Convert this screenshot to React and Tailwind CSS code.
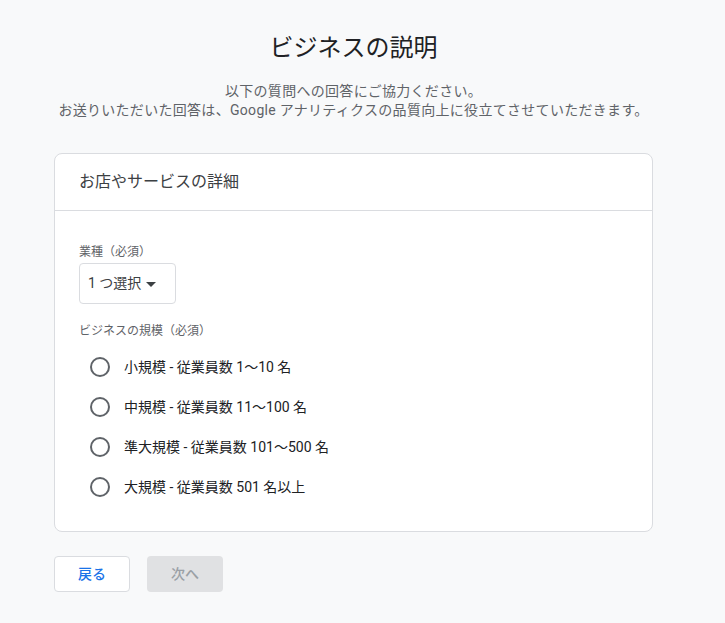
import React, { useState } from 'react';

const sizes = [
  '小規模 - 従業員数 1〜10 名',
  '中規模 - 従業員数 11〜100 名',
  '準大規模 - 従業員数 101〜500 名',
  '大規模 - 従業員数 501 名以上',
];

export default function App() {
  const [size, setSize] = useState(null);

  return (
    <div
      className="min-h-[623px] bg-[#f8f9fa]"
      style={{ fontFamily: "Roboto, 'Noto Sans CJK JP', sans-serif" }}
    >
      <div className="ml-[54px] w-[599px] pt-[30px]">
        {/* Heading */}
        <h1 className="text-center text-[24px] leading-[36px] text-[#202124]">ビジネスの説明</h1>
        <div className="mt-[16px] text-center text-[14px] leading-[19px] tracking-[0.3px] text-[#5f6368]">
          <p>以下の質問への回答にご協力ください。</p>
          <p className="whitespace-nowrap">お送りいただいた回答は、Google アナリティクスの品質向上に役立てさせていただきます。</p>
        </div>

        {/* Card */}
        <div className="mt-[33px] rounded-lg border border-[#dadce0] bg-white">
          <div className="h-[57px] border-b border-[#dadce0] px-6 flex items-center">
            <h2 className="text-[16px] text-[#3c4043]">お店やサービスの詳細</h2>
          </div>

          <div className="px-6 pt-[33px] pb-[24px]">
            <label className="block text-[12px] leading-[16px] text-[#5f6368]">業種（必須）</label>
            <button className="mt-[3px] h-[41px] w-[97px] rounded border border-[#dadce0] bg-white flex items-center pl-[8px] gap-[5px] text-[14px] text-[#3c4043]">
              <span>1 つ選択</span>
              <svg width="10" height="5" viewBox="0 0 10 5" className="mt-[1px]">
                <path d="M0 0 L5 5 L10 0 Z" fill="#3c4043" />
              </svg>
            </button>

            <label className="mt-[19px] block text-[12px] leading-[16px] text-[#5f6368]">ビジネスの規模（必須）</label>
            <div className="mt-[8px] flex flex-col">
              {sizes.map((s, i) => (
                <button
                  key={s}
                  onClick={() => setSize(i)}
                  className="h-[40px] flex items-center text-left"
                >
                  <span className="ml-[11px] w-[20px] h-[20px] rounded-full border-2 border-[#5f6368] flex items-center justify-center">
                    {size === i && <span className="w-[10px] h-[10px] rounded-full bg-[#1a73e8]" />}
                  </span>
                  <span className="ml-[14px] text-[14px] text-[#202124]">{s}</span>
                </button>
              ))}
            </div>
          </div>
        </div>

        {/* Actions */}
        <div className="mt-[24px] flex gap-[17px]">
          <button className="h-[36px] w-[76px] rounded border border-[#dadce0] bg-white text-[14px] font-medium text-[#1a73e8]">
            戻る
          </button>
          <button disabled className="h-[36px] w-[76px] rounded bg-[#e0e1e3] text-[14px] font-medium text-[#9aa0a6]">
            次へ
          </button>
        </div>
      </div>
    </div>
  );
}
